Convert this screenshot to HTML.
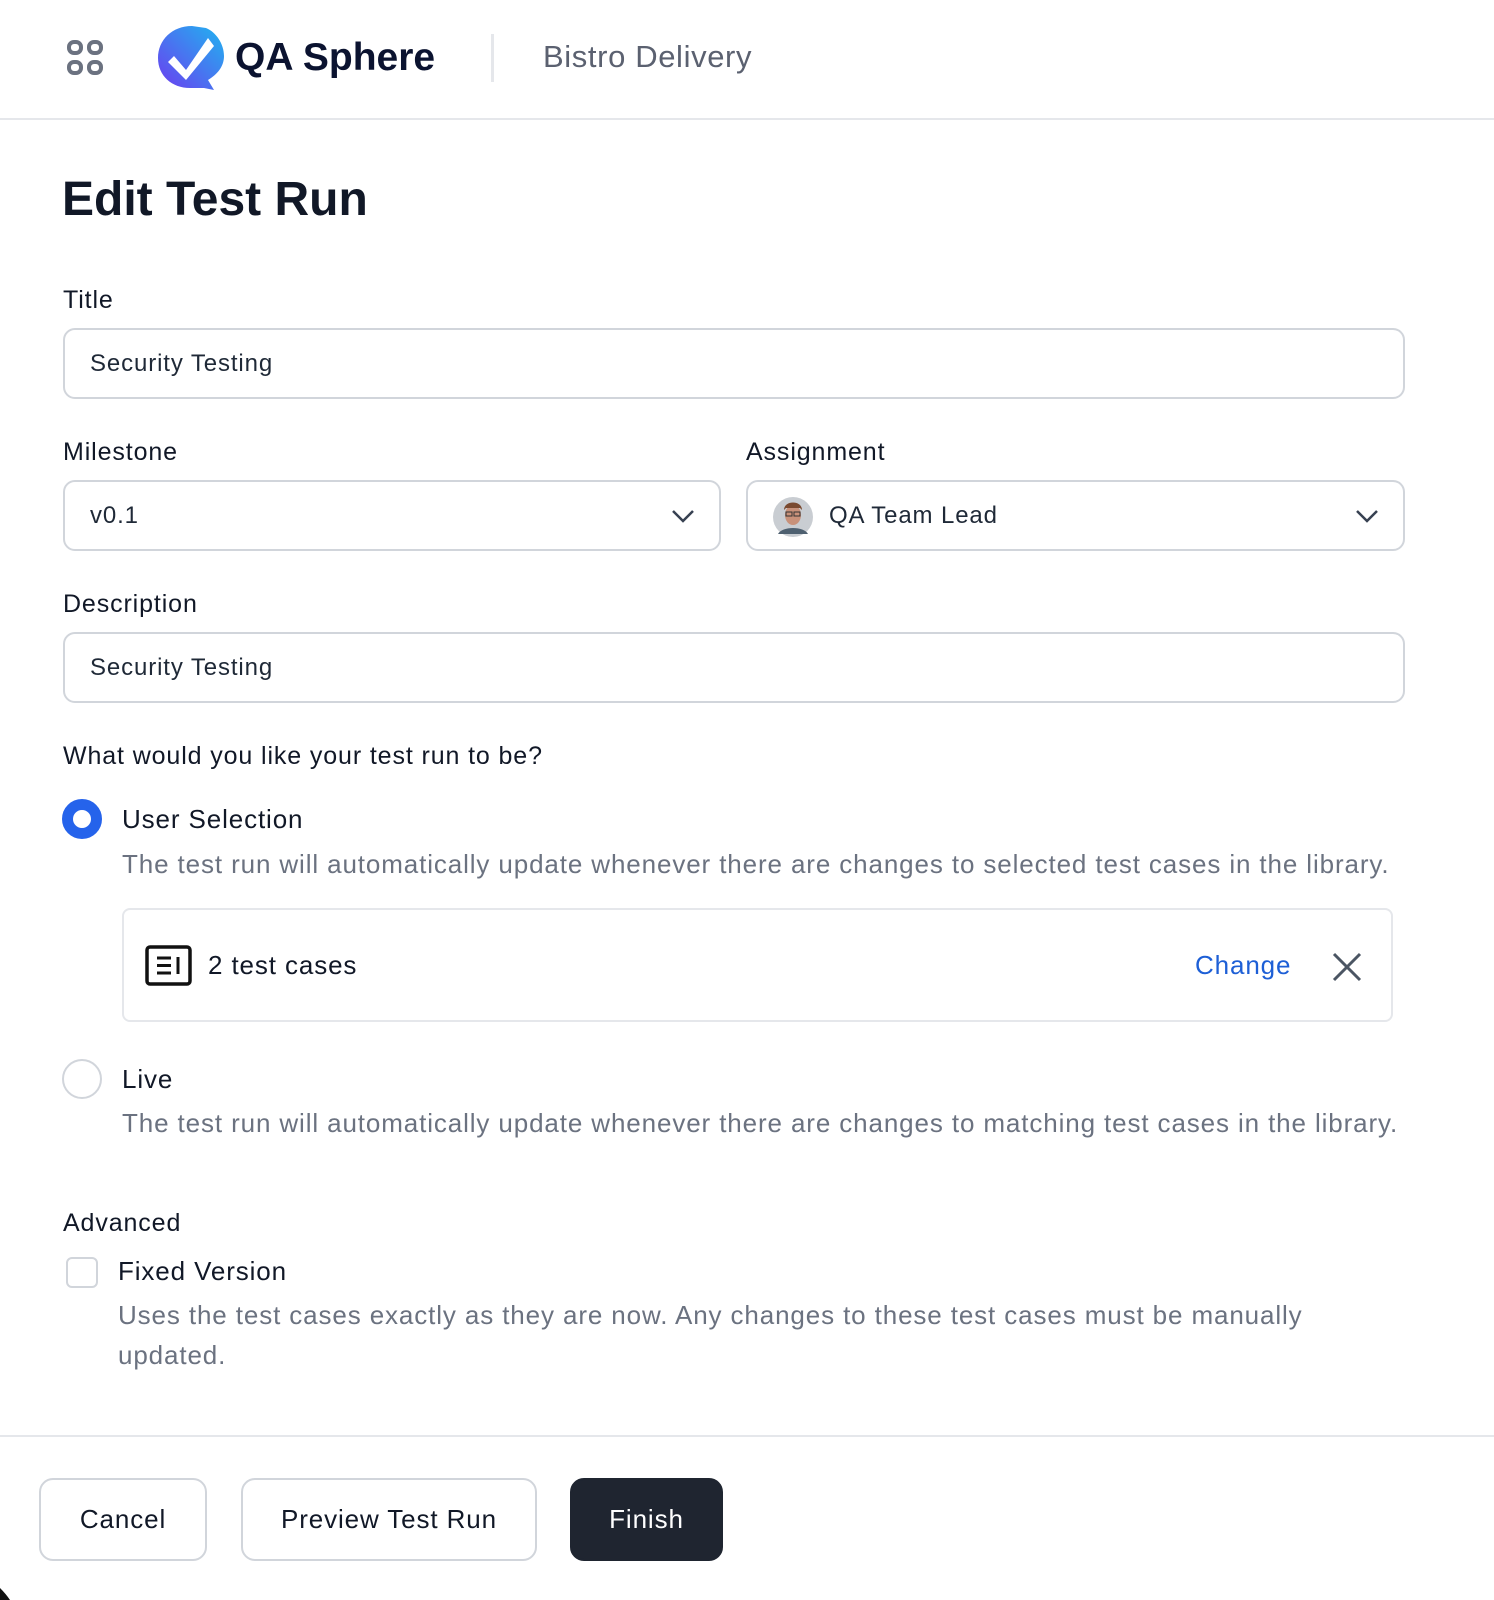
<!DOCTYPE html>
<html><head><meta charset="utf-8"><style>
*{box-sizing:border-box;margin:0;padding:0}
body{width:1494px;height:1600px;background:#fff;font-family:"Liberation Sans",sans-serif;color:#111827;position:relative;overflow:hidden;letter-spacing:0.055em}
.a{position:absolute;white-space:nowrap}
.lbl{font-size:25px;color:#111827;line-height:30px}
.inp{position:absolute;border:2px solid #d1d5db;border-radius:12px;background:#fff}
.inp span{position:absolute;left:25px;top:50%;transform:translateY(-50%);font-size:24px;color:#1f2937}
.desc{font-size:26px;color:#6b7280;line-height:30px}
.btn{position:absolute;border:2px solid #d1d5db;border-radius:14px;font-size:26px;display:flex;align-items:center;justify-content:center;color:#111827}
</style></head><body>
<svg class="a" style="left:66px;top:39px" width="40" height="38" viewBox="0 0 40 38"><g fill="none" stroke="#6b7280" stroke-width="4"><rect x="3" y="3" width="12" height="11" rx="5"/><rect x="23" y="3" width="12" height="11" rx="5"/><rect x="3" y="23" width="12" height="11" rx="5"/><rect x="23" y="23" width="12" height="11" rx="5"/></g></svg>
<svg class="a" style="left:156px;top:24px" width="76" height="68" viewBox="0 0 76 68"><defs><linearGradient id="g" x1="0" y1="1" x2="1" y2="0"><stop offset="0" stop-color="#6d3cf0"/><stop offset="1" stop-color="#1fb5f0"/></linearGradient></defs><path d="M36 2 C16 2 2 16 2 34 C2 52 16 64 34 64 L48 64 L58 66 L52 56 C62 50 68 42 68 32 C68 20 60 8 50 4 Z" fill="url(#g)"/><path d="M18 32 L30 46 L52 14 L58 22 L30 56 L12 38 Z" fill="#fff"/></svg>
<div class="a" style="left:235px;top:36px;font-size:39px;font-weight:bold;color:#0b1330;letter-spacing:0">QA Sphere</div>
<div class="a" style="left:491px;top:34px;width:3px;height:48px;background:#e5e7eb"></div>
<div class="a" style="left:543px;top:39px;font-size:31px;color:#5b6170;letter-spacing:0.02em">Bistro Delivery</div>
<div class="a" style="left:0;top:118px;width:1494px;height:2px;background:#e5e7eb"></div>

<div class="a" style="left:62px;top:172px;font-size:48px;font-weight:bold;color:#111827;letter-spacing:0">Edit Test Run</div>

<div class="a lbl" style="left:63px;top:285px">Title</div>
<div class="inp" style="left:63px;top:328px;width:1342px;height:71px"><span>Security Testing</span></div>

<div class="a lbl" style="left:63px;top:437px">Milestone</div>
<div class="inp" style="left:63px;top:480px;width:658px;height:71px"><span>v0.1</span>
<svg style="position:absolute;right:24px;top:26px" width="24" height="16" viewBox="0 0 24 16"><path d="M2 3 L12 13 L22 3" fill="none" stroke="#374151" stroke-width="2.5"/></svg></div>
<div class="a lbl" style="left:746px;top:437px">Assignment</div>
<div class="inp" style="left:746px;top:480px;width:659px;height:71px">
<svg style="position:absolute;left:24px;top:14px" width="42" height="42" viewBox="0 0 42 42"><circle cx="21" cy="21" r="20" fill="#c9cdd2"/><path d="M6 38 C10 30 32 30 36 38 Z" fill="#4e6070"/><ellipse cx="21" cy="19" rx="8" ry="10" fill="#c8917a"/><path d="M12 14 C12 4 30 4 30 14 L28 12 L14 12 Z" fill="#7a4a30"/><rect x="14" y="16" width="6" height="4" fill="none" stroke="#333" stroke-width="1"/><rect x="22" y="16" width="6" height="4" fill="none" stroke="#333" stroke-width="1"/></svg>
<span style="left:81px">QA Team Lead</span>
<svg style="position:absolute;right:24px;top:26px" width="24" height="16" viewBox="0 0 24 16"><path d="M2 3 L12 13 L22 3" fill="none" stroke="#374151" stroke-width="2.5"/></svg></div>

<div class="a lbl" style="left:63px;top:589px">Description</div>
<div class="inp" style="left:63px;top:632px;width:1342px;height:71px"><span>Security Testing</span></div>

<div class="a lbl" style="left:63px;top:741px">What would you like your test run to be?</div>

<div class="a" style="left:62px;top:799px;width:40px;height:40px;border-radius:50%;border:11px solid #2563eb;background:#fff"></div>
<div class="a lbl" style="left:122px;top:804px;font-size:26px">User Selection</div>
<div class="a desc" style="left:122px;top:849px">The test run will automatically update whenever there are changes to selected test cases in the library.</div>

<div class="a" style="left:122px;top:908px;width:1271px;height:114px;border:2px solid #e5e7eb;border-radius:8px"></div>
<svg class="a" style="left:145px;top:945px" width="47" height="41" viewBox="0 0 47 41"><rect x="2" y="2" width="43" height="37" rx="3" fill="none" stroke="#111" stroke-width="3.5"/><path d="M12 13 H26 M12 20.5 H26 M12 28 H26 M33 12 V29" stroke="#111" stroke-width="3"/></svg>
<div class="a" style="left:208px;top:950px;font-size:26px;color:#111827">2 test cases</div>
<div class="a" style="left:1195px;top:950px;font-size:26px;color:#1d5fd6">Change</div>
<svg class="a" style="left:1332px;top:952px" width="30" height="30" viewBox="0 0 30 30"><path d="M2 2 L28 28 M28 2 L2 28" stroke="#4b5563" stroke-width="3"/></svg>

<div class="a" style="left:62px;top:1059px;width:40px;height:40px;border-radius:50%;border:2px solid #d1d5db"></div>
<div class="a lbl" style="left:122px;top:1064px;font-size:26px">Live</div>
<div class="a desc" style="left:122px;top:1108px">The test run will automatically update whenever there are changes to matching test cases in the library.</div>

<div class="a lbl" style="left:63px;top:1208px">Advanced</div>
<div class="a" style="left:66px;top:1257px;width:32px;height:31px;border:2px solid #d1d5db;border-radius:6px"></div>
<div class="a lbl" style="left:118px;top:1256px;font-size:26px">Fixed Version</div>
<div class="a desc" style="left:118px;top:1300px">Uses the test cases exactly as they are now. Any changes to these test cases must be manually</div>
<div class="a desc" style="left:118px;top:1340px">updated.</div>

<div class="a" style="left:0;top:1435px;width:1494px;height:2px;background:#e5e7eb"></div>
<div class="btn" style="left:39px;top:1478px;width:168px;height:83px">Cancel</div>
<div class="btn" style="left:241px;top:1478px;width:296px;height:83px">Preview Test Run</div>
<div class="btn" style="left:570px;top:1478px;width:153px;height:83px;background:#1f2530;border-color:#1f2530;color:#fff">Finish</div>
<svg class="a" style="left:0;top:1588px" width="12" height="12" viewBox="0 0 12 12"><path d="M0 0 Q6 6 10 12 L0 12 Z" fill="#111"/></svg>
</body></html>
